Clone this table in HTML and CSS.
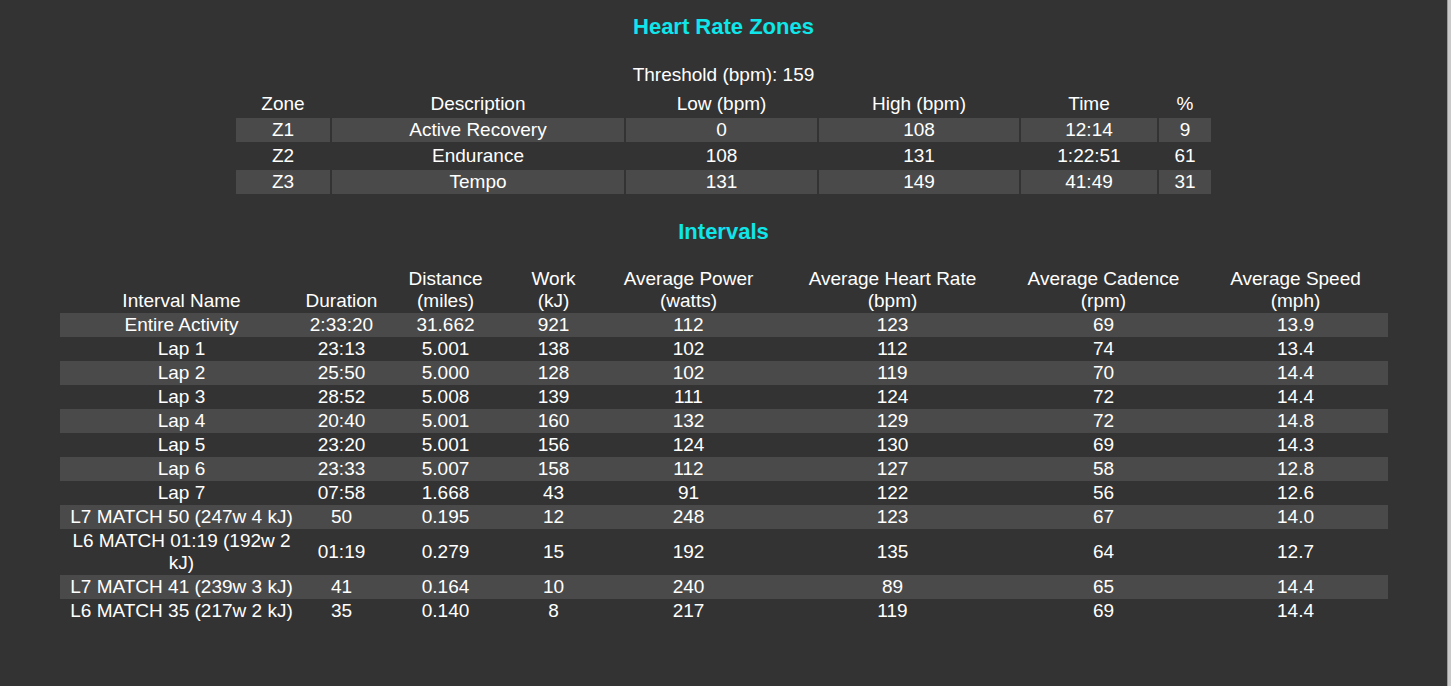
FILE: index.html
```html
<!DOCTYPE html>
<html lang="en">
<head>
<meta charset="utf-8">
<title>Activity Summary</title>
<link rel="stylesheet" href="styles.css">
</head>
<body>
<div class="page">
  <main class="main">
    <h2 class="title title-zones">Heart Rate Zones</h2>
    <div class="threshold">Threshold (bpm): 159</div>
    <table class="zones">
      <colgroup>
        <col class="z-zone"><col class="z-desc"><col class="z-low"><col class="z-high"><col class="z-time"><col class="z-pct">
      </colgroup>
      <thead>
        <tr><th>Zone</th><th>Description</th><th>Low (bpm)</th><th>High (bpm)</th><th>Time</th><th>%</th></tr>
      </thead>
      <tbody>
        <tr><td>Z1</td><td>Active Recovery</td><td>0</td><td>108</td><td>12:14</td><td>9</td></tr>
        <tr><td>Z2</td><td>Endurance</td><td>108</td><td>131</td><td>1:22:51</td><td>61</td></tr>
        <tr><td>Z3</td><td>Tempo</td><td>131</td><td>149</td><td>41:49</td><td>31</td></tr>
      </tbody>
    </table>

    <h2 class="title title-intervals">Intervals</h2>
    <table class="intervals">
      <colgroup>
        <col class="i-name"><col class="i-dur"><col class="i-dist"><col class="i-work"><col class="i-pow"><col class="i-hr"><col class="i-cad"><col class="i-spd">
      </colgroup>
      <thead>
        <tr>
          <th>Interval Name</th>
          <th>Duration</th>
          <th>Distance<br>(miles)</th>
          <th>Work<br>(kJ)</th>
          <th>Average Power<br>(watts)</th>
          <th>Average Heart Rate<br>(bpm)</th>
          <th>Average Cadence<br>(rpm)</th>
          <th>Average Speed<br>(mph)</th>
        </tr>
      </thead>
      <tbody>
        <tr><td>Entire Activity</td><td>2:33:20</td><td>31.662</td><td>921</td><td>112</td><td>123</td><td>69</td><td>13.9</td></tr>
        <tr><td>Lap 1</td><td>23:13</td><td>5.001</td><td>138</td><td>102</td><td>112</td><td>74</td><td>13.4</td></tr>
        <tr><td>Lap 2</td><td>25:50</td><td>5.000</td><td>128</td><td>102</td><td>119</td><td>70</td><td>14.4</td></tr>
        <tr><td>Lap 3</td><td>28:52</td><td>5.008</td><td>139</td><td>111</td><td>124</td><td>72</td><td>14.4</td></tr>
        <tr><td>Lap 4</td><td>20:40</td><td>5.001</td><td>160</td><td>132</td><td>129</td><td>72</td><td>14.8</td></tr>
        <tr><td>Lap 5</td><td>23:20</td><td>5.001</td><td>156</td><td>124</td><td>130</td><td>69</td><td>14.3</td></tr>
        <tr><td>Lap 6</td><td>23:33</td><td>5.007</td><td>158</td><td>112</td><td>127</td><td>58</td><td>12.8</td></tr>
        <tr><td>Lap 7</td><td>07:58</td><td>1.668</td><td>43</td><td>91</td><td>122</td><td>56</td><td>12.6</td></tr>
        <tr><td>L7 MATCH 50 (247w 4 kJ)</td><td>50</td><td>0.195</td><td>12</td><td>248</td><td>123</td><td>67</td><td>14.0</td></tr>
        <tr><td>L6 MATCH 01:19 (192w 2 kJ)</td><td>01:19</td><td>0.279</td><td>15</td><td>192</td><td>135</td><td>64</td><td>12.7</td></tr>
        <tr><td>L7 MATCH 41 (239w 3 kJ)</td><td>41</td><td>0.164</td><td>10</td><td>240</td><td>89</td><td>65</td><td>14.4</td></tr>
        <tr><td>L6 MATCH 35 (217w 2 kJ)</td><td>35</td><td>0.140</td><td>8</td><td>217</td><td>119</td><td>69</td><td>14.4</td></tr>
      </tbody>
    </table>
  </main>
  <div class="edge"></div>
</div>
</body>
</html>
```

FILE: styles.css
```css
html, body {
  margin: 0;
  padding: 0;
  height: 100%;
}

body {
  background: #333333;
  color: #ffffff;
  font-family: "Liberation Sans", Arial, sans-serif;
  font-size: 19px;
  line-height: 22px;
}

.page {
  display: flex;
  min-height: 100%;
}

.main {
  flex: 1;
  text-align: center;
  padding-top: 14px;
}

.edge {
  width: 3px;
  background: #c9c9c9;
  border-left: 1px solid #9a9a9a;
}

.title {
  margin: 0;
  font-size: 22px;
  line-height: 26px;
  font-weight: bold;
  color: #0fe6ea;
}

.threshold {
  margin-top: 24px;
  line-height: 22px;
}

.zones {
  margin: 4px auto 0;
  border-collapse: separate;
  border-spacing: 2px;
  table-layout: fixed;
  width: 979px;
}

.zones th,
.zones td {
  padding: 1px 0;
  font-weight: normal;
  text-align: center;
  line-height: 22px;
}

.zones tbody tr:nth-child(odd) td {
  background: #4a4a4a;
}

.z-zone { width: 94px; }
.z-desc { width: 292px; }
.z-low { width: 191px; }
.z-high { width: 200px; }
.z-time { width: 136px; }
.z-pct { width: 52px; }

.title-intervals {
  margin-top: 23px;
}

.intervals {
  margin: 22px auto 0;
  border-collapse: collapse;
  border-spacing: 0;
  table-layout: fixed;
  width: 1328px;
}

.intervals th,
.intervals td {
  padding: 1px 0;
  font-weight: normal;
  text-align: center;
  line-height: 22px;
}

.intervals th {
  vertical-align: bottom;
}

.intervals td {
  vertical-align: middle;
}

.intervals tbody tr:nth-child(odd) {
  background: #4a4a4a;
}

.i-name { width: 244px; }
.i-dur { width: 76px; }
.i-dist { width: 132px; }
.i-work { width: 84px; }
.i-pow { width: 186px; }
.i-hr { width: 222px; }
.i-cad { width: 200px; }
.i-spd { width: 184px; }
```
